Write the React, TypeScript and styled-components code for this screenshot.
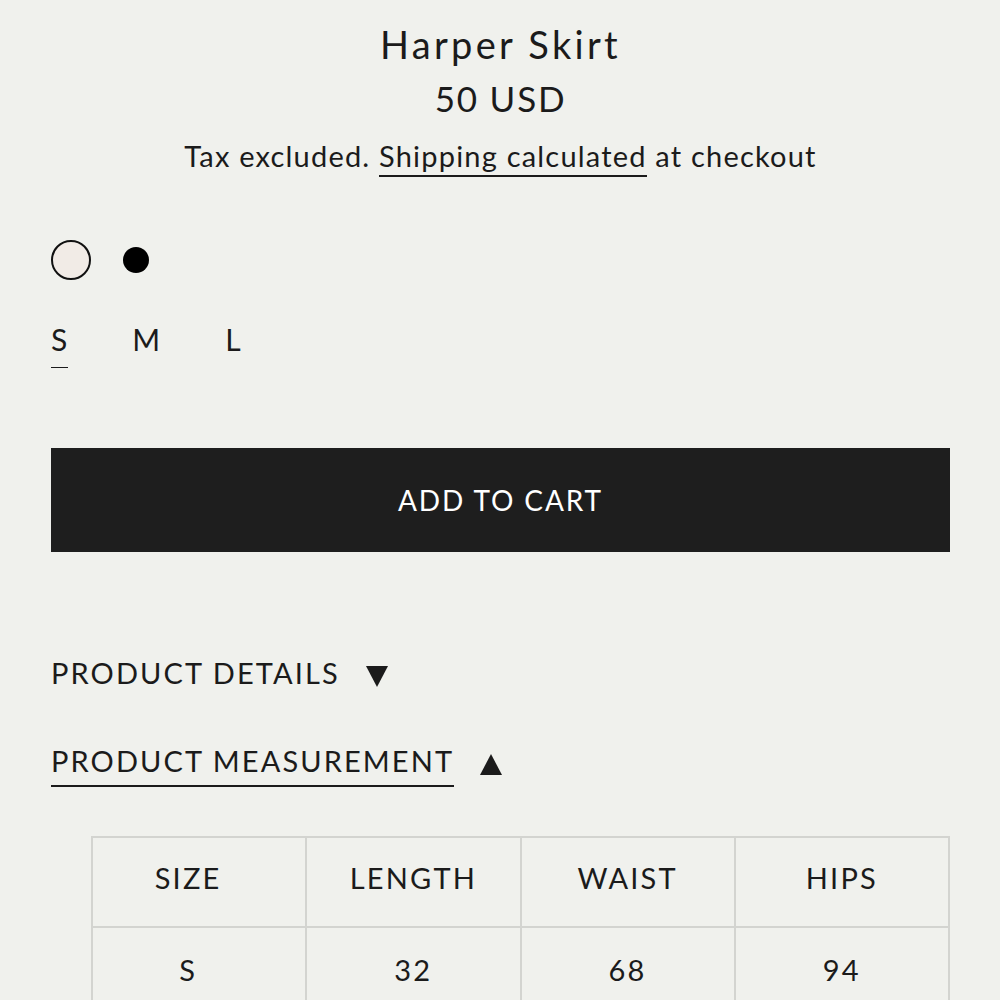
import styled, { createGlobalStyle } from 'styled-components';

const GlobalStyle = createGlobalStyle`
  html, body {
    margin: 0;
    padding: 0;
    background: #f0f1ed;
  }
  body {
    font-family: Lato, "Noto Sans", "Liberation Sans", sans-serif;
    color: #1b1b1b;
  }
`;

const Page = styled.div`
  width: 1000px;
  box-sizing: border-box;
  padding: 18px 50px 0 51px;
  display: flex;
  flex-direction: column;
`;

const Title = styled.h1`
  margin: 0;
  text-align: center;
  font-weight: 400;
  font-size: 38px;
  line-height: 52px;
  letter-spacing: 3.3px;
`;

const Price = styled.div`
  margin-top: 2px;
  text-align: center;
  font-size: 35px;
  line-height: 52px;
  letter-spacing: 1.8px;
`;

const TaxNote = styled.p`
  margin: 12px 0 0;
  text-align: center;
  font-size: 29px;
  line-height: 40px;
  letter-spacing: 1.2px;
`;

const TextLink = styled.a`
  color: inherit;
  text-decoration: none;
  border-bottom: 2px solid #1b1b1b;
  padding-bottom: 2px;
`;

const Swatches = styled.div`
  display: flex;
  align-items: center;
  gap: 32px;
  margin-top: 63px;
  height: 42px;
`;

const Swatch = styled.span<{ $color: string; $size: number; $selected?: boolean }>`
  display: block;
  box-sizing: border-box;
  width: ${p => p.$size}px;
  height: ${p => p.$size}px;
  border-radius: 50%;
  background: ${p => p.$color};
  border: ${p => (p.$selected ? '2.5px solid #111' : 'none')};
`;

const Sizes = styled.div`
  display: flex;
  gap: 64px;
  margin-top: 36px;
`;

const SizeOption = styled.span<{ $active?: boolean }>`
  font-size: 30px;
  line-height: 44px;
  letter-spacing: 1px;
  padding-bottom: 6px;
  border-bottom: 1px solid ${p => (p.$active ? '#1b1b1b' : 'transparent')};
`;

const CartButton = styled.button`
  margin-top: 80px;
  width: 899px;
  height: 104px;
  border: none;
  background: #1e1e1e;
  color: #fff;
  font-family: inherit;
  font-size: 28px;
  letter-spacing: 1.9px;
  cursor: pointer;
`;

const Accordion = styled.div`
  display: flex;
  align-items: center;
  gap: 26px;
`;

const AccordionTitle = styled.span<{ $open?: boolean }>`
  font-size: 29px;
  line-height: 40px;
  letter-spacing: 2.1px;
  padding-bottom: 4px;
  border-bottom: 2px solid ${p => (p.$open ? '#1b1b1b' : 'transparent')};
`;

const Arrow = styled.span<{ $up?: boolean }>`
  width: 0;
  height: 0;
  border-left: 11.5px solid transparent;
  border-right: 11.5px solid transparent;
  ${p =>
    p.$up
      ? 'border-bottom: 21px solid #1b1b1b;'
      : 'border-top: 21px solid #1b1b1b;'}
`;

const Details = styled(Accordion)`
  margin-top: 101px;
`;

const Measurement = styled(Accordion)`
  margin-top: 42px;
`;

const TableWrap = styled.div`
  margin: 49px 0 0 40px;
`;

const SizeTable = styled.table`
  width: 859px;
  border-collapse: collapse;
  table-layout: fixed;
`;

const Cell = styled.td<{ $first?: boolean }>`
  border: 2px solid #d3d4d0;
  height: 90px;
  box-sizing: border-box;
  text-align: center;
  font-size: 29px;
  letter-spacing: 2.2px;
  padding: 0 ${p => (p.$first ? '22px' : '0')} 6px 0;
`;

const HeadCell = styled(Cell).attrs({ as: 'th' })`
  font-weight: 400;
  padding-bottom: 10px;
`;

const headers = ['SIZE', 'LENGTH', 'WAIST', 'HIPS'];
const rows = [['S', '32', '68', '94']];

export default function App() {
  return (
    <>
      <GlobalStyle />
      <Page>
        <Title>Harper Skirt</Title>
        <Price>50 USD</Price>
        <TaxNote>
          Tax excluded. <TextLink href="#">Shipping calculated</TextLink> at checkout
        </TaxNote>

        <Swatches>
          <Swatch $color="#f1ebe6" $size={40} $selected />
          <Swatch $color="#000" $size={26} />
        </Swatches>

        <Sizes>
          <SizeOption $active>S</SizeOption>
          <SizeOption>M</SizeOption>
          <SizeOption>L</SizeOption>
        </Sizes>

        <CartButton>ADD TO CART</CartButton>

        <Details>
          <AccordionTitle>PRODUCT DETAILS</AccordionTitle>
          <Arrow />
        </Details>
        <Measurement>
          <AccordionTitle $open>PRODUCT MEASUREMENT</AccordionTitle>
          <Arrow $up />
        </Measurement>

        <TableWrap>
          <SizeTable>
            <thead>
              <tr>
                {headers.map((h, i) => (
                  <HeadCell key={h} $first={i === 0}>
                    {h}
                  </HeadCell>
                ))}
              </tr>
            </thead>
            <tbody>
              {rows.map(r => (
                <tr key={r[0]}>
                  {r.map((v, i) => (
                    <Cell key={i} $first={i === 0}>
                      {v}
                    </Cell>
                  ))}
                </tr>
              ))}
            </tbody>
          </SizeTable>
        </TableWrap>
      </Page>
    </>
  );
}
